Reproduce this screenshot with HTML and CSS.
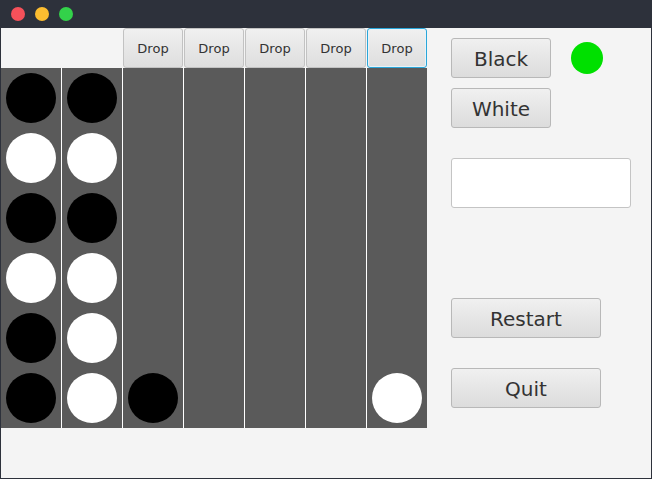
FILE: index.html
```html
<!DOCTYPE html>
<html>
<head>
<meta charset="utf-8">
<link rel="stylesheet" href="styles.css">
</head>
<body>
<div class="titlebar">
  <span class="light red"></span>
  <span class="light yellow"></span>
  <span class="light green"></span>
</div>
<div class="content">
  <div class="board">
    <div class="header">
      <div class="slot"></div>
      <div class="slot"></div>
      <button class="drop">Drop</button>
      <button class="drop">Drop</button>
      <button class="drop">Drop</button>
      <button class="drop">Drop</button>
      <button class="drop focus">Drop</button>
    </div>
    <div class="grid">
      <div class="col">
        <div class="cell"><span class="disc black"></span></div>
        <div class="cell"><span class="disc white"></span></div>
        <div class="cell"><span class="disc black"></span></div>
        <div class="cell"><span class="disc white"></span></div>
        <div class="cell"><span class="disc black"></span></div>
        <div class="cell"><span class="disc black"></span></div>
      </div>
      <div class="col">
        <div class="cell"><span class="disc black"></span></div>
        <div class="cell"><span class="disc white"></span></div>
        <div class="cell"><span class="disc black"></span></div>
        <div class="cell"><span class="disc white"></span></div>
        <div class="cell"><span class="disc white"></span></div>
        <div class="cell"><span class="disc white"></span></div>
      </div>
      <div class="col">
        <div class="cell"></div><div class="cell"></div><div class="cell"></div>
        <div class="cell"></div><div class="cell"></div>
        <div class="cell"><span class="disc black"></span></div>
      </div>
      <div class="col">
        <div class="cell"></div><div class="cell"></div><div class="cell"></div>
        <div class="cell"></div><div class="cell"></div><div class="cell"></div>
      </div>
      <div class="col">
        <div class="cell"></div><div class="cell"></div><div class="cell"></div>
        <div class="cell"></div><div class="cell"></div><div class="cell"></div>
      </div>
      <div class="col">
        <div class="cell"></div><div class="cell"></div><div class="cell"></div>
        <div class="cell"></div><div class="cell"></div><div class="cell"></div>
      </div>
      <div class="col">
        <div class="cell"></div><div class="cell"></div><div class="cell"></div>
        <div class="cell"></div><div class="cell"></div>
        <div class="cell"><span class="disc white"></span></div>
      </div>
    </div>
  </div>
  <div class="side">
    <div class="row">
      <button class="btn w100">Black</button>
      <span class="indicator"></span>
    </div>
    <button class="btn w100 mt10">White</button>
    <input class="field" type="text">
    <button class="btn w150 restart">Restart</button>
    <button class="btn w150 mt30">Quit</button>
  </div>
</div>
</body>
</html>
```

FILE: styles.css
```css
html, body {
  margin: 0;
  padding: 0;
  background: #2d313b;
  width: 652px;
  height: 479px;
  overflow: hidden;
  font-family: "DejaVu Sans", "Liberation Sans", sans-serif;
}

.titlebar {
  height: 28px;
  display: flex;
  align-items: center;
  padding-left: 11px;
  gap: 10px;
  box-sizing: border-box;
}

.light {
  width: 14px;
  height: 14px;
  border-radius: 50%;
  display: block;
}
.red { background: #f5515a; }
.yellow { background: #fcbd30; }
.green { background: #33d24a; }

.content {
  margin: 0 1px;
  height: 450px;
  background: #f4f4f4;
  display: flex;
}

.board {
  width: 426px;
  display: flex;
  flex-direction: column;
}

.header {
  height: 40px;
  display: flex;
  gap: 1px;
}

.slot {
  width: 60px;
}

.drop {
  width: 60px;
  height: 40px;
  margin: 0;
  padding: 1px 0 0;
  border: 1px solid #c2c2c2;
  border-radius: 3px;
  background: linear-gradient(#f0f0f0, #dedede);
  font-family: "DejaVu Sans", sans-serif;
  font-size: 13px;
  color: #333;
}

.drop.focus {
  border-color: #2aa6d9;
  box-shadow: inset 0 0 0 1px #e6f3f9;
}

.grid {
  height: 360px;
  display: flex;
  gap: 1px;
  background: #ffffff;
}

.col {
  width: 60px;
  background: #5a5a5a;
  display: flex;
  flex-direction: column;
}

.cell {
  height: 60px;
  display: flex;
  align-items: center;
  justify-content: center;
}

.disc {
  width: 50px;
  height: 50px;
  border-radius: 50%;
  display: block;
}
.disc.black { background: #000; }
.disc.white { background: #fff; }

.side {
  padding: 10px 0 0 24px;
  display: flex;
  flex-direction: column;
  align-items: flex-start;
}

.row {
  display: flex;
  align-items: center;
  gap: 20px;
}

.indicator {
  width: 32px;
  height: 32px;
  border-radius: 50%;
  background: #00e000;
  display: block;
}

.btn {
  height: 40px;
  margin: 0;
  padding: 2px 0 0;
  border: 1px solid #b8b8b8;
  border-radius: 3px;
  background: linear-gradient(#f0f0f0, #dcdcdc);
  font-family: "DejaVu Sans", sans-serif;
  font-size: 20px;
  color: #333;
}

.w100 { width: 100px; }
.w150 { width: 150px; }
.mt10 { margin-top: 10px; }
.mt30 { margin-top: 30px; }

.field {
  margin-top: 30px;
  width: 180px;
  height: 50px;
  box-sizing: border-box;
  border: 1px solid #c4c4c4;
  border-radius: 3px;
  background: #fff;
  padding: 0;
}

.restart { margin-top: 90px; }
```
